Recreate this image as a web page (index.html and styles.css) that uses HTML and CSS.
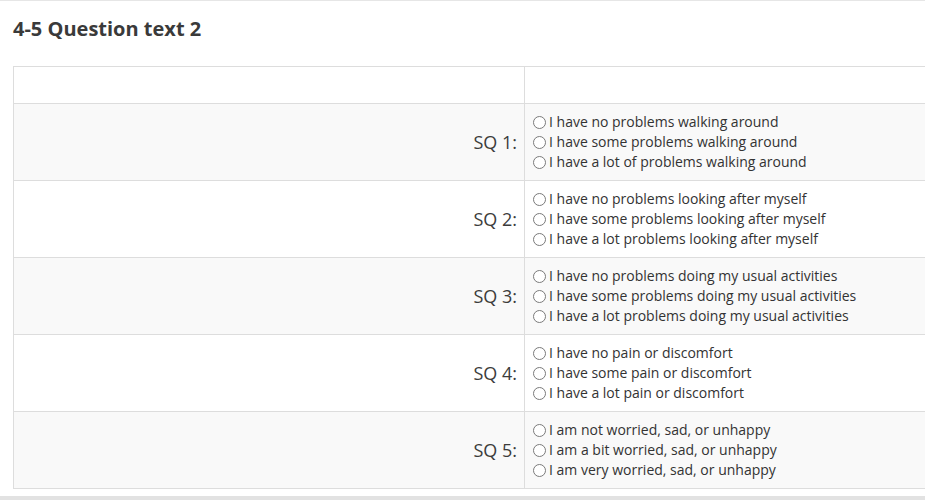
FILE: index.html
```html
<!DOCTYPE html>
<html>
<head>
<meta charset="utf-8">
<link rel="stylesheet" href="styles.css">
</head>
<body>
<div class="page">
  <h2 class="title">4-5 Question text 2</h2>
  <table class="grid">
    <tr class="head"><td class="head-label"></td><td class="head-answers"></td></tr>
    <tr class="odd">
      <td class="label">SQ 1:</td>
      <td class="answers">
        <div class="opt"><span class="radio"></span>I have no problems walking around</div>
        <div class="opt"><span class="radio"></span>I have some problems walking around</div>
        <div class="opt"><span class="radio"></span>I have a lot of problems walking around</div>
      </td>
    </tr>
    <tr class="even">
      <td class="label">SQ 2:</td>
      <td class="answers">
        <div class="opt"><span class="radio"></span>I have no problems looking after myself</div>
        <div class="opt"><span class="radio"></span>I have some problems looking after myself</div>
        <div class="opt"><span class="radio"></span>I have a lot problems looking after myself</div>
      </td>
    </tr>
    <tr class="odd">
      <td class="label">SQ 3:</td>
      <td class="answers">
        <div class="opt"><span class="radio"></span>I have no problems doing my usual activities</div>
        <div class="opt"><span class="radio"></span>I have some problems doing my usual activities</div>
        <div class="opt"><span class="radio"></span>I have a lot problems doing my usual activities</div>
      </td>
    </tr>
    <tr class="even">
      <td class="label">SQ 4:</td>
      <td class="answers">
        <div class="opt"><span class="radio"></span>I have no pain or discomfort</div>
        <div class="opt"><span class="radio"></span>I have some pain or discomfort</div>
        <div class="opt"><span class="radio"></span>I have a lot pain or discomfort</div>
      </td>
    </tr>
    <tr class="odd">
      <td class="label">SQ 5:</td>
      <td class="answers">
        <div class="opt"><span class="radio"></span>I am not worried, sad, or unhappy</div>
        <div class="opt"><span class="radio"></span>I am a bit worried, sad, or unhappy</div>
        <div class="opt"><span class="radio"></span>I am very worried, sad, or unhappy</div>
      </td>
    </tr>
  </table>
  <div class="footer-bar"></div>
</div>
</body>
</html>
```

FILE: styles.css
```css
html, body {
  margin: 0;
  padding: 0;
  background: #fff;
  overflow: hidden;
}
body {
  font-family: "Open Sans", "Liberation Sans", sans-serif;
  color: #333;
  width: 925px;
  height: 502px;
}
.page {
  border-top: 1px solid #e6e6e6;
  padding-left: 13px;
  width: 1200px;
}
.title {
  margin: 0;
  padding-top: 14px;
  height: 65px;
  box-sizing: border-box;
  font-size: 20px;
  font-weight: 700;
  line-height: 28px;
  color: #3a3a3a;
}
.grid {
  border-collapse: collapse;
  width: 1000px;
}
.grid td {
  border: 1px solid #dddddd;
  padding: 0;
}
.head td {
  height: 36px;
  background: #fff;
}
.head-label { width: 510px; }
.odd td { background: #f9f9f9; }
.even td { background: #fff; }
.grid td.label {
  width: 503px;
  text-align: right;
  padding-right: 7px;
  font-size: 18px;
  color: #3c3c3c;
  vertical-align: middle;
}
.grid td.answers {
  padding: 8px 0 8px 8px;
  font-size: 14px;
  line-height: 20px;
  color: #333;
  vertical-align: middle;
}
.opt {
  display: flex;
  align-items: center;
  white-space: nowrap;
}
.radio {
  display: inline-block;
  width: 11px;
  height: 11px;
  border: 1px solid #7a7a7a;
  border-radius: 50%;
  background: #fff;
  margin-right: 3px;
  flex: none;
}
.footer-bar {
  margin-left: -13px;
  margin-top: 7px;
  height: 4px;
  background: #e2e2e2;
  width: 1200px;
}
```
